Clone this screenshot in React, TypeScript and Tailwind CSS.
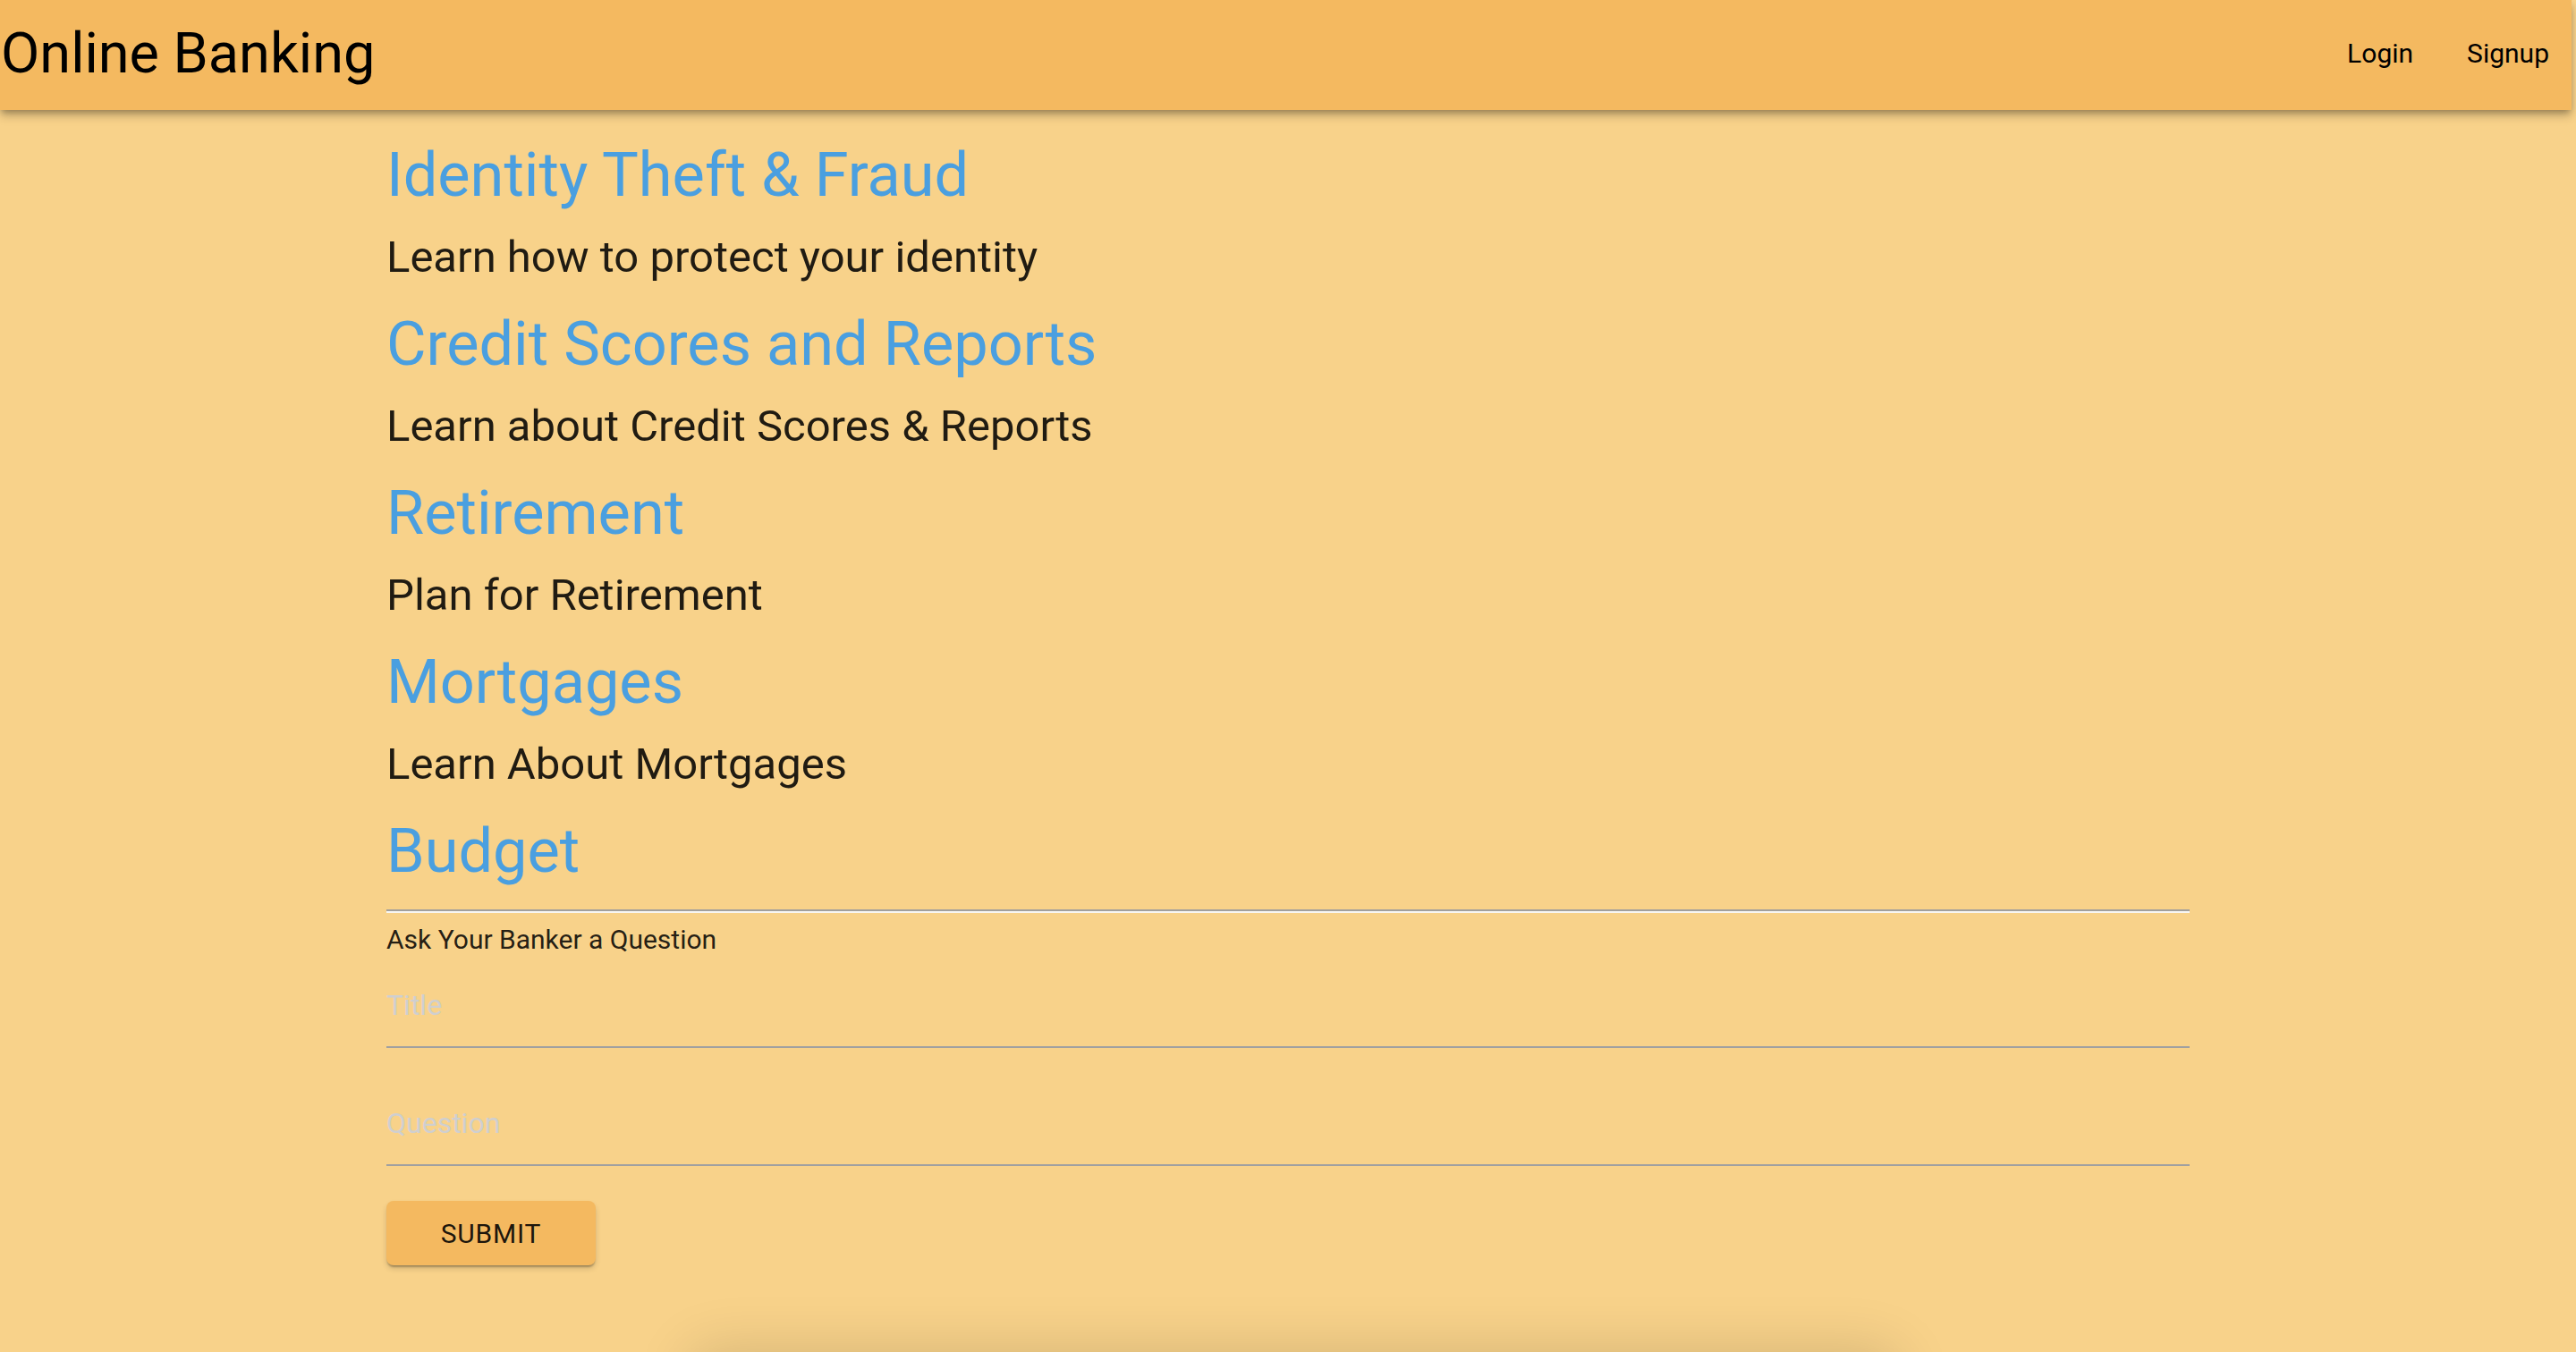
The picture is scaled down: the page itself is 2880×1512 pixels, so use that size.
import React from "react"

const topics = [
  { title: "Identity Theft & Fraud", text: "Learn how to protect your identity" },
  { title: "Credit Scores and Reports", text: "Learn about Credit Scores & Reports" },
  { title: "Retirement", text: "Plan for Retirement" },
  { title: "Mortgages", text: "Learn About Mortgages" },
]

const NavBar = () => {
  return (
    <div className="w-[2875px] h-[123px] bg-[#F4B960] flex items-center justify-between shadow-[0_4px_8px_-2px_rgba(0,0,0,0.35),0_8px_10px_0_rgba(0,0,0,0.14)] relative z-10 shrink-0">
      <h1 className="text-[63px] leading-[78px] text-black pl-[1px] -mt-[4px]">Online Banking</h1>
      <div className="flex items-center h-full -mt-[4px]">
        <button className="px-[30px] h-[72px] text-[30px] text-black">Login</button>
        <button className="px-[30px] h-[72px] text-[30px] text-black mr-[-5px]">Signup</button>
      </div>
    </div>
  )
}

const App = () => {
  return (
    <div className="h-screen w-full overflow-hidden bg-[#F8D28A] flex flex-col font-['Roboto',sans-serif]">
      <NavBar />

      <div className="ml-[432px] w-[2016px] pt-[31px] flex flex-col">
        {topics.map((t) => (
          <div key={t.title} className="flex flex-col">
            <h2 className="text-[68.5px] leading-[84px] text-[#4A9FE0] mb-[18px]">{t.title}</h2>
            <p className="text-[49px] leading-[64px] text-black/87 mb-[23px]">{t.text}</p>
          </div>
        ))}
        <h2 className="text-[68.5px] leading-[84px] text-[#4A9FE0]">Budget</h2>

        <div className="mt-[23px] border-t-2 border-b-2 border-t-[#a2a09c] border-b-[#f8f6f2]" />

        <div className="text-[30px] leading-[40px] text-black/87 mt-[10px]">Ask Your Banker a Question</div>

        <div className="mt-[34px] border-b-2 border-[#a0a0a0] pb-[27px]">
          <input
            placeholder="Title"
            className="w-full bg-transparent outline-none text-[32px] leading-[38px] h-[38px] placeholder:text-[#cfcfd0]"
          />
        </div>

        <div className="mt-[65px] border-b-2 border-[#a0a0a0] pb-[27px]">
          <input
            placeholder="Question"
            className="w-full bg-transparent outline-none text-[32px] leading-[38px] h-[38px] placeholder:text-[#cfcfd0]"
          />
        </div>

        <button className="mt-[39px] w-[234px] h-[72px] rounded-[8px] bg-[#F4B960] text-[30px] tracking-[0.8px] text-black/90 shadow-[0_3px_2px_-1px_rgba(0,0,0,0.25),0_4px_6px_0_rgba(0,0,0,0.14)]">
          SUBMIT
        </button>

        <div className="mt-[110px] ml-[355px] w-[1320px] h-[400px] shrink-0 bg-[#F8D28A] rounded-[8px] shadow-[0_0_64px_16px_rgba(0,0,0,0.14)]" />
      </div>
    </div>
  )
}

export default App
